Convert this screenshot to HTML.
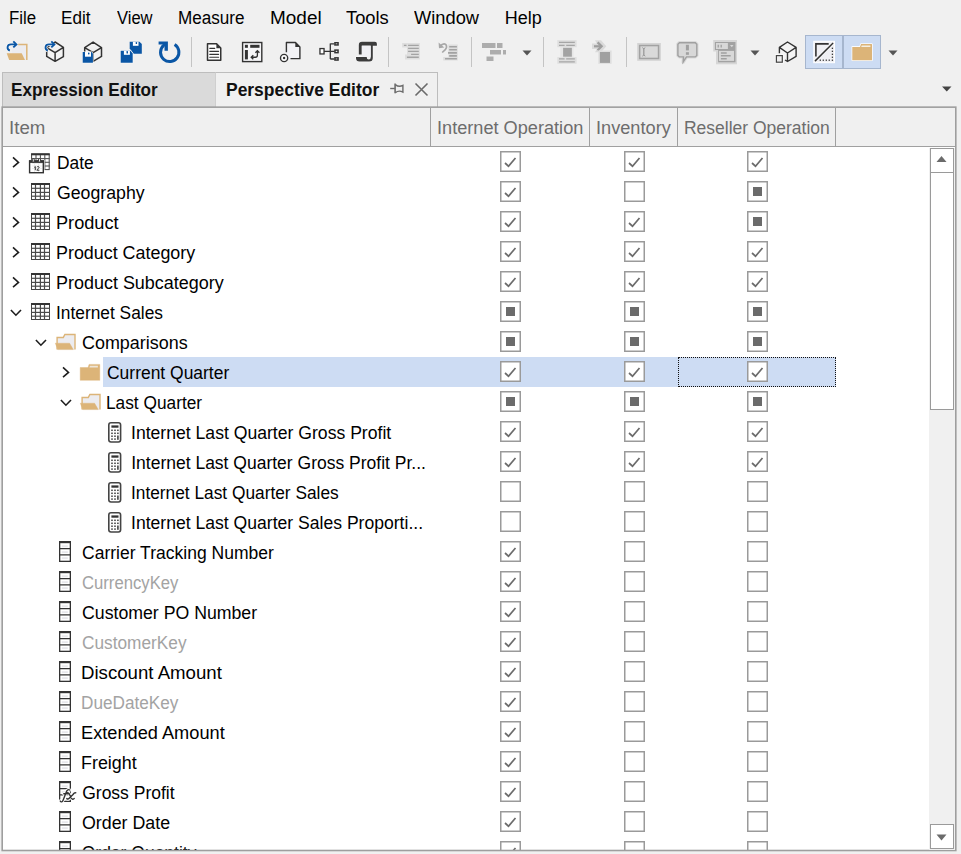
<!DOCTYPE html>
<html><head><meta charset="utf-8"><style>
html,body{margin:0;padding:0;width:961px;height:854px;overflow:hidden;background:#f0f0f0;position:relative}
.t{position:absolute;white-space:nowrap;line-height:1;font-family:"Liberation Sans", sans-serif;transform-origin:0 0}
svg{overflow:visible}
</style></head><body>
<div class="t" style="left:9.2px;top:9.01px;font-size:18px;color:#000;font-weight:normal;transform:scaleX(0.9352);">File</div><div class="t" style="left:61.2px;top:9.01px;font-size:18px;color:#000;font-weight:normal;transform:scaleX(0.9500);">Edit</div><div class="t" style="left:116.7px;top:9.01px;font-size:18px;color:#000;font-weight:normal;transform:scaleX(0.9187);">View</div><div class="t" style="left:177.7px;top:9.01px;font-size:18px;color:#000;font-weight:normal;transform:scaleX(0.9493);">Measure</div><div class="t" style="left:269.7px;top:9.01px;font-size:18px;color:#000;font-weight:normal;transform:scaleX(1.0532);">Model</div><div class="t" style="left:345.7px;top:9.01px;font-size:18px;color:#000;font-weight:normal;transform:scaleX(1.0183);">Tools</div><div class="t" style="left:414.2px;top:9.01px;font-size:18px;color:#000;font-weight:normal;transform:scaleX(1.0156);">Window</div><div class="t" style="left:504.7px;top:9.01px;font-size:18px;color:#000;font-weight:normal;">Help</div><div style="position:absolute;left:191.0px;top:37px;width:1px;height:30px;background:#c4c4c4"></div><div style="position:absolute;left:388.0px;top:37px;width:1px;height:30px;background:#c4c4c4"></div><div style="position:absolute;left:471.0px;top:37px;width:1px;height:30px;background:#c4c4c4"></div><div style="position:absolute;left:543.0px;top:37px;width:1px;height:30px;background:#c4c4c4"></div><div style="position:absolute;left:626.0px;top:37px;width:1px;height:30px;background:#c4c4c4"></div><div style="position:absolute;left:805px;top:35px;width:76px;height:34px;background:#cddcf3;border:1px solid #a6b6ce;box-sizing:border-box"></div><div style="position:absolute;left:842px;top:35px;width:1.5px;height:34px;background:#a6b6ce"></div><svg style="position:absolute;left:4px;top:38px;" width="28" height="26" viewBox="0 0 28 26">
<path d="M12 6.4 H22.8 V21.9 H8 V12 Z" fill="#ececf0"/>
<path d="M14.2 6.4 H22.8 V21.9" fill="none" stroke="#dcb478" stroke-width="1.5"/>
<path d="M2.7 15.2 H17.7 L21 21.9 H5.2 Z" fill="#dcb478"/>
<path d="M5.8 12.6 C2.6 11.2 2.6 6.4 7 6.4 H12" fill="none" stroke="#f8f8f8" stroke-width="3.4"/>
<path d="M5.8 12.6 C2.6 11.2 2.6 6.4 7 6.4 H12" fill="none" stroke="#0a56a5" stroke-width="1.8"/>
<path d="M9.3 3.4 L12.4 6.4 L9.3 9.4" fill="none" stroke="#0a56a5" stroke-width="1.9"/>
</svg><svg style="position:absolute;left:42px;top:38px;" width="26" height="28" viewBox="0 0 26 28">
<path d="M13.1 4 L21.4 9.3 V18.7 L13.1 23.3 L4.7 18.4 V9.6 Z M4.7 9.6 L13.1 14.6 L21.4 9.3 M13.1 14.6 V23.3" fill="#f4f4f4" stroke="#333" stroke-width="1.5" stroke-linejoin="round"/>
<path d="M5.8 12.6 C2.6 11.2 2.6 6.4 7 6.4 H12" fill="none" stroke="#f8f8f8" stroke-width="3.4"/>
<path d="M5.8 12.6 C2.6 11.2 2.6 6.4 7 6.4 H12" fill="none" stroke="#0a56a5" stroke-width="1.8"/>
<path d="M9.3 3.4 L12.4 6.4 L9.3 9.4" fill="none" stroke="#0a56a5" stroke-width="1.9"/>
</svg><svg style="position:absolute;left:80px;top:38px;" width="26" height="28" viewBox="0 0 26 28">
<path d="M13.1 4.1 L21.5 9.6 V18.4 L13.1 23.3 L4.7 18.4 V9.6 Z M4.7 9.6 L13.1 14.6 L21.5 9.6 M13.1 14.6 V23.3" fill="#f4f4f4" stroke="#333" stroke-width="1.5" stroke-linejoin="round"/>
<path d="M2.7 14 H11.5 L12.9 15.5 V24.7 H2.7 Z" fill="#0a56a5" stroke="#fafafa" stroke-width="1.2" paint-order="stroke"/>
<rect x="5" y="14" width="6" height="4.7" fill="#fff"/>
<rect x="8" y="14.4" width="1.5" height="2" rx="0.6" fill="#0a56a5"/>
</svg><svg style="position:absolute;left:118px;top:38px;" width="26" height="28" viewBox="0 0 26 28">
<path d="M11.7 3.8 H21.5 L23.8 6 V15.7 H15.6 L11.7 10.6 Z" fill="#0a56a5"/>
<rect x="14.9" y="3.8" width="5.6" height="4" fill="#fff"/>
<rect x="17.7" y="4" width="1.4" height="2" rx="0.6" fill="#0a56a5"/>
<path d="M2.7 12.75 H12.5 L14.7 15.5 V24.7 H2.7 Z" fill="#0a56a5" stroke="#fafafa" stroke-width="1.3" paint-order="stroke"/>
<rect x="5.9" y="12.75" width="6" height="4.05" fill="#fff"/>
<rect x="8.5" y="13" width="1.5" height="2.5" rx="0.6" fill="#0a56a5"/>
</svg><svg style="position:absolute;left:156px;top:38px;" width="26" height="28" viewBox="0 0 26 28">
<path d="M18.6 6.5 A9.2 9.2 0 1 1 7.2 7.8" fill="none" stroke="#0a56a5" stroke-width="3"/>
<path d="M2.6 3.6 H11.9 V12.75 H8.5 V6.6 H2.6 Z" fill="#0a56a5"/>
<path d="M6.5 8.5 L10 5" stroke="#0a56a5" stroke-width="3"/>
</svg><svg style="position:absolute;left:204px;top:40px;" width="20" height="24" viewBox="0 0 20 24">
<path d="M3.5 3.65 H12.6 L16.75 7.9 V20.15 H3.5 Z" fill="#fff" stroke="#333" stroke-width="1.5" stroke-linejoin="round"/>
<path d="M12.4 3.65 L16.75 8.2 H12.4 Z" fill="#333"/>
<path d="M5.8 8.3 H10.75 M5.8 11.3 H14.6 M5.8 14.3 H14.6 M5.8 17.25 H14.6" stroke="#333" stroke-width="1.2" stroke-linecap="round"/>
</svg><svg style="position:absolute;left:240px;top:40px;" width="24" height="24" viewBox="0 0 24 24">
<rect x="2.6" y="2.5" width="19.2" height="19.1" fill="#f6f6f8" stroke="#333" stroke-width="1.4"/>
<rect x="4.9" y="4.8" width="3" height="3" fill="#333"/>
<rect x="10.2" y="4.8" width="9.3" height="3" fill="#333"/>
<rect x="4.9" y="10" width="3" height="9.4" fill="#333"/>
<path d="M17.4 10.6 V15.3 A2 2 0 0 1 15.4 17.25 H11.2 M15.4 12.8 L17.4 10.6 L19.4 12.8 M13.3 15.2 L11.2 17.25 L13.3 19.3" fill="none" stroke="#333" stroke-width="1.3"/>
</svg><svg style="position:absolute;left:277px;top:40px;" width="26" height="24" viewBox="0 0 26 24">
<path d="M9.4 2.5 H18.5 L22.9 6.9 V18.65 H9.4 Z" fill="#f2f2f5"/>
<path d="M9.4 12.3 V2.5 H18.5 L22.9 6.9 V18.65 H13.5" fill="none" stroke="#333" stroke-width="1.4" stroke-linejoin="round"/>
<path d="M18.3 2.5 L22.9 7.1 H18.3 Z" fill="#333"/>
<circle cx="7.1" cy="18" r="4.3" fill="#f6f6f6"/>
<circle cx="7.1" cy="18" r="3.6" fill="#fff" stroke="#333" stroke-width="1.4"/>
<circle cx="7.1" cy="18" r="1.2" fill="#333"/>
</svg><svg style="position:absolute;left:317px;top:40px;" width="24" height="24" viewBox="0 0 24 24">
<rect x="2.95" y="8.55" width="4.1" height="5.4" fill="#fff" stroke="#333" stroke-width="1.3"/>
<path d="M7.05 11.3 H17.5 M13.3 3.6 V19 M13.3 3.85 H17.5 M13.3 19 H17.5" fill="none" stroke="#333" stroke-width="1.3"/>
<rect x="17.95" y="2.75" width="3.1" height="2.2" fill="#fff" stroke="#333" stroke-width="1.5"/>
<rect x="17.95" y="10.1" width="3.1" height="2.55" fill="#fff" stroke="#333" stroke-width="1.5"/>
<rect x="17.95" y="17.85" width="3.1" height="2.2" fill="#fff" stroke="#333" stroke-width="1.5"/>
</svg><svg style="position:absolute;left:350px;top:36px;" width="30" height="30" viewBox="0 0 30 30">
<path d="M8.8 18.6 V9 A3.2 3.2 0 0 1 12 5.8 H25 A1.9 1.9 0 0 1 26.9 7.7 V9.66 H22.8 V22 A3.6 3.6 0 0 1 19.2 25.6 H9.5 A3.5 3.5 0 0 1 6 22.1 V20.9 H16.8 V21.5 A1.95 1.95 0 0 0 20.7 21.5 V9.66 H11.8 V18.6 Z" fill="#3c3c3c" stroke="#fff" stroke-width="0.8" paint-order="stroke"/>
<rect x="11.8" y="9.66" width="8.9" height="11.2" fill="#f0f0f4"/>
</svg><svg style="position:absolute;left:400px;top:40px;" width="22" height="22" viewBox="0 0 22 22">
<path d="M2.1 3 H19.9 V19.5 H5 V14.5 H7 V7.4 H2.1 Z" fill="#dedede"/>
<path d="M3.9 5.3 H6.5 M8.1 5.3 H18.8 M8.1 8.3 H18.8 M8.1 11.3 H18.8 M11.1 14.3 H18.8 M6.9 17.25 H18.8" stroke="#a3a3a3" stroke-width="1.3"/>
</svg><svg style="position:absolute;left:435px;top:38px;" width="24" height="26" viewBox="0 0 24 26">
<path d="M13.3 6.4 H22.8 V22.6 H8.2 V19 H13.3 Z" fill="#dedede"/>
<path d="M14.2 8.7 H21.9 M14.2 11.7 H21.9 M13 14.9 H21.9 M14.2 17.85 H21.9 M10 20.8 H21.9" stroke="#a3a3a3" stroke-width="1.6"/>
<path d="M7.2 14.5 L10.3 11.6 C12.6 9.5 11.6 5.8 9 5.8 C7.6 5.8 6.4 6.6 5.4 8" fill="none" stroke="#a8a8a8" stroke-width="1.7"/>
<path d="M3.6 4.6 L4 10.2 L9.3 9.6 Z" fill="#a8a8a8"/>
</svg><svg style="position:absolute;left:480px;top:40px;" width="28" height="24" viewBox="0 0 28 24">
<rect x="2" y="3" width="13.5" height="5" fill="#adadad"/>
<rect x="17" y="3" width="5.5" height="5" fill="#adadad"/>
<rect x="10" y="10" width="11" height="4.5" fill="#adadad"/>
<rect x="23" y="10" width="3" height="4.5" fill="#adadad"/>
<rect x="6.5" y="16.5" width="7" height="4.5" fill="#adadad"/>
</svg><svg style="position:absolute;left:521.5px;top:49.5px;" width="10" height="6" viewBox="0 0 10 6"><path d="M0.5 0.5 H9.5 L5 5.5 Z" fill="#555"/></svg><svg style="position:absolute;left:750px;top:49.5px;" width="10" height="6" viewBox="0 0 10 6"><path d="M0.5 0.5 H9.5 L5 5.5 Z" fill="#555"/></svg><svg style="position:absolute;left:887.5px;top:49.5px;" width="10" height="6" viewBox="0 0 10 6"><path d="M0.5 0.5 H9.5 L5 5.5 Z" fill="#555"/></svg><svg style="position:absolute;left:555px;top:38px;" width="24" height="28" viewBox="0 0 24 28">
<rect x="5.3" y="9.2" width="13.2" height="10.1" fill="#e6e6e6"/>
<rect x="2.3" y="2.2" width="19.3" height="7" fill="#dedede"/>
<rect x="2.3" y="19.1" width="19.3" height="6.65" fill="#dedede"/>
<path d="M4 4.3 H19.8 M4 7.3 H9.6 M11.2 7.3 H19.8 M4 20.8 H9.6 M11.2 20.8 H19.8 M4 23.8 H19.8" stroke="#a6a6a6" stroke-width="1.3"/>
<rect x="8.1" y="9.8" width="8.75" height="8.9" fill="#a3a3a3"/>
</svg><svg style="position:absolute;left:590px;top:38px;" width="24" height="28" viewBox="0 0 24 28">
<path d="M2 5.5 H6.8 L5 2.2 H11 L16.3 8.3 L11 14.3 H5 L6.8 11 H2 Z" fill="#dadada"/>
<path d="M4 8.3 H11.5" stroke="#9e9e9e" stroke-width="2.2"/>
<path d="M7.6 4.4 L11.6 8.3 L7.6 12.2" fill="none" stroke="#9e9e9e" stroke-width="2.3"/>
<rect x="8.3" y="12.5" width="13.3" height="13.3" fill="#dedede"/>
<rect x="9.9" y="14" width="10.1" height="10.9" fill="#a0a0a0"/>
</svg><svg style="position:absolute;left:635px;top:40px;" width="28" height="24" viewBox="0 0 28 24">
<rect x="2.2" y="3" width="23.7" height="17.8" fill="#d4d4d4"/>
<rect x="4.65" y="5.55" width="18.9" height="12.9" fill="#d9d9d9" stroke="#a2a2a2" stroke-width="1.5"/>
<path d="M8.8 8.3 V15.5" stroke="#999" stroke-width="1.3"/>
<path d="M7.3 7.6 L8.8 8.8 L10.3 7.6 M7.3 16.2 L8.8 15 L10.3 16.2" fill="none" stroke="#9a9a9a" stroke-width="1"/>
</svg><svg style="position:absolute;left:674px;top:38px;" width="26" height="28" viewBox="0 0 26 28">
<path d="M5.4 4.8 H21.3 L22.8 6.3 V17.4 L21.3 18.9 H12.5 L9.2 24 L9.5 18.9 H5.4 L3.9 17.4 V6.3 Z" fill="#d8d8d8" stroke="#dadada" stroke-width="3.4" stroke-linejoin="round"/>
<path d="M5.4 4.8 H21.3 L22.8 6.3 V17.4 L21.3 18.9 H12.5 L9.2 24 L9.5 18.9 H5.4 L3.9 17.4 V6.3 Z" fill="#d8d8d8" stroke="#a0a0a0" stroke-width="1.4"/>
<rect x="11.9" y="6.8" width="3" height="5.6" fill="#a0a0a0"/>
<rect x="11.9" y="14.2" width="3" height="2.6" fill="#a0a0a0"/>
</svg><svg style="position:absolute;left:711px;top:38px;" width="28" height="28" viewBox="0 0 28 28">
<rect x="2.2" y="2" width="23.8" height="11.5" fill="#d6d6d6"/>
<rect x="5" y="12" width="21" height="14.3" fill="#d6d6d6"/>
<rect x="3.9" y="4" width="20.6" height="8" fill="#a2a2a2"/>
<rect x="5" y="5" width="11.9" height="6" fill="#d8d8d8"/>
<path d="M7.25 6.8 V9.5 M10.2 6.8 V9.5" stroke="#a0a0a0" stroke-width="1.3"/>
<path d="M19 7 H22.5 L20.75 9.2 Z" fill="#d8d8d8"/>
<rect x="7.1" y="12" width="17.4" height="12.3" fill="#a2a2a2"/>
<rect x="8" y="12.9" width="15" height="10" fill="#d8d8d8"/>
<path d="M9.9 14.9 H15.7 M9.9 17.85 H19.7 M9.9 20.8 H15.7" stroke="#a0a0a0" stroke-width="1.5"/>
</svg><svg style="position:absolute;left:773px;top:38px;" width="26" height="28" viewBox="0 0 26 28">
<path d="M6.4 9.4 L14.5 4 L23.1 9.4 V18.4 L14.5 23.5 L6.4 18.4 Z" fill="#f4f4f4"/>
<path d="M6.4 15.2 V9.4 L14.5 4 L23.1 9.4 V18.4 L14.5 23.5 L12 22 M6.4 9.4 L14.5 15 L23.1 9.4 M14.5 15 V23.5" fill="none" stroke="#333" stroke-width="1.4" stroke-linejoin="round"/>
<rect x="3.4" y="17.6" width="5.9" height="6.6" fill="#ededed" stroke="#fafafa" stroke-width="3"/>
<rect x="3.4" y="17.6" width="5.9" height="6.6" fill="#ededed" stroke="#444" stroke-width="1.2"/>
</svg><svg style="position:absolute;left:812px;top:40px;" width="24" height="24" viewBox="0 0 24 24">
<rect x="1.8" y="1.3" width="20.7" height="21.4" fill="#f0f0f4" stroke="#fff" stroke-width="1"/>
<path d="M3.9 16.4 V3.9 H16.7" fill="none" stroke="#333" stroke-width="1.6"/>
<path d="M3 21.1 L21.1 3" stroke="#fafafa" stroke-width="2.6"/>
<path d="M3 21.1 L21.1 3" stroke="#333" stroke-width="1.5"/>
<rect x="19.75" y="7.65" width="1.3" height="1.3" fill="#333"/><rect x="19.75" y="10.65" width="1.3" height="1.3" fill="#333"/><rect x="19.75" y="13.65" width="1.3" height="1.3" fill="#333"/><rect x="19.75" y="16.60" width="1.3" height="1.3" fill="#333"/><rect x="19.75" y="19.55" width="1.3" height="1.3" fill="#333"/><rect x="7.65" y="19.55" width="1.3" height="1.3" fill="#333"/><rect x="10.65" y="19.55" width="1.3" height="1.3" fill="#333"/><rect x="13.65" y="19.55" width="1.3" height="1.3" fill="#333"/><rect x="16.60" y="19.55" width="1.3" height="1.3" fill="#333"/>
</svg><svg style="position:absolute;left:849px;top:40px;" width="26" height="24" viewBox="0 0 26 24">
<path d="M3.3 6.9 H11 L12 4.1 H22.6 A0.5 0.5 0 0 1 23 4.5 V20.2 H3.3 Z" fill="#dcb478" stroke="#fafcff" stroke-width="1.6" paint-order="stroke" stroke-linejoin="round"/>
<path d="M12.7 5.5 H21.4 V6.9 H12.2 Z" fill="#f6efe2"/>
</svg><div style="position:absolute;left:2px;top:72px;width:213px;height:35px;background:#dadada;border-top:1px solid #bdbdbd;border-left:1px solid #bdbdbd;box-sizing:border-box"></div><div style="position:absolute;left:215px;top:72px;width:223px;height:35px;background:#f0f0f0;border-top:1px solid #bdbdbd;border-right:1px solid #bdbdbd;border-left:1px solid #cfcfcf;box-sizing:border-box"></div><div class="t" style="left:11.0px;top:82.19px;font-size:17.5px;color:#111;font-weight:bold;transform:scaleX(0.9799);">Expression Editor</div><div class="t" style="left:225.5px;top:82.19px;font-size:17.5px;color:#111;font-weight:bold;transform:scaleX(0.9967);">Perspective Editor</div><svg style="position:absolute;left:388px;top:80px;" width="18" height="16" viewBox="0 0 18 16">
<path d="M2.2 8.5 H6.9" stroke="#6b6b6b" stroke-width="1.4"/>
<path d="M7.1 3.5 V13.2" stroke="#6b6b6b" stroke-width="1.6"/>
<path d="M7.3 4.6 Q11 7.6 14.9 5.4 V12.1 Q11 10 7.3 12.6" fill="none" stroke="#6b6b6b" stroke-width="1.4"/>
</svg><svg style="position:absolute;left:413px;top:81px;" width="18" height="18" viewBox="0 0 18 18"><path d="M2.5 2.5 L14.5 14.5 M14.5 2.5 L2.5 14.5" stroke="#6b6b6b" stroke-width="1.6"/></svg><svg style="position:absolute;left:941px;top:85px;" width="12" height="8" viewBox="0 0 12 8"><path d="M1 1.5 H10.5 L5.75 6.5 Z" fill="#444"/></svg><div style="position:absolute;left:2px;top:107px;width:954px;height:744px;background:#fff"></div><div style="position:absolute;left:3px;top:108px;width:953px;height:38.5px;background:#f0f0f0"></div><div style="position:absolute;left:3px;top:145.8px;width:953px;height:1.5px;background:#a0a0a0"></div><div style="position:absolute;left:430px;top:108px;width:1.2px;height:38.5px;background:#a0a0a0"></div><div style="position:absolute;left:589px;top:108px;width:1.2px;height:38.5px;background:#a0a0a0"></div><div style="position:absolute;left:677px;top:108px;width:1.2px;height:38.5px;background:#a0a0a0"></div><div style="position:absolute;left:835px;top:108px;width:1.2px;height:38.5px;background:#a0a0a0"></div><div class="t" style="left:9.25px;top:120.19px;font-size:17.5px;color:#6d6d6d;font-weight:normal;transform:scaleX(1.0672);">Item</div><div class="t" style="left:437.05px;top:120.19px;font-size:17.5px;color:#6d6d6d;font-weight:normal;transform:scaleX(1.0374);">Internet Operation</div><div class="t" style="left:595.5px;top:120.19px;font-size:17.5px;color:#6d6d6d;font-weight:normal;transform:scaleX(1.0387);">Inventory</div><div class="t" style="left:683.7px;top:120.19px;font-size:17.5px;color:#6d6d6d;font-weight:normal;transform:scaleX(0.9986);">Reseller Operation</div><div style="position:absolute;left:0;top:0;width:929px;height:849.5px;overflow:hidden"><div style="position:absolute;left:103px;top:357px;width:575px;height:30px;background:#cddcf3"></div><div style="position:absolute;left:678px;top:357px;width:157.5px;height:29.5px;background:#cddcf3;border:1px dotted #111;box-sizing:border-box"></div><svg style="position:absolute;left:9.6px;top:154.8px;" width="12" height="16" viewBox="0 0 12 16"><path d="M3 2.3 L8.5 7.4 L3 12.1" fill="none" stroke="#1e1e1e" stroke-width="1.6"/></svg><svg style="position:absolute;left:29px;top:152.5px;" width="22" height="21" viewBox="0 0 22 21"><rect x="2.6" y="0.9" width="17.6" height="15.7" fill="#fff" stroke="#444" stroke-width="1"/><rect x="2.1" y="0.4" width="18.6" height="1.9" fill="#333"/><path d="M7.0 2 V17" stroke="#555" stroke-width="1.1"/><path d="M11.4 2 V17" stroke="#555" stroke-width="1.1"/><path d="M15.8 2 V17" stroke="#555" stroke-width="1.1"/><path d="M2.1 5.6 H20.7" stroke="#555" stroke-width="1.1"/><path d="M2.1 9.3 H20.7" stroke="#555" stroke-width="1.1"/><path d="M2.1 13.0 H20.7" stroke="#555" stroke-width="1.1"/><rect x="0.6" y="8" width="13.7" height="11.7" fill="#fff" stroke="#fafafa" stroke-width="2.4"/><rect x="0.6" y="8" width="13.7" height="11.7" fill="#fff" stroke="#333" stroke-width="1.4"/><rect x="0" y="7.3" width="15" height="2.6" fill="#333"/><path d="M3.2 10.5 H13 M3.2 13 H13 M3.2 15.5 H13 M5.5 10 V19 M9.5 10 V19" stroke="#e6e6e6" stroke-width="0.8"/><rect x="3.3" y="5.6" width="1.9" height="3.4" rx="0.6" fill="#fff" stroke="#333" stroke-width="1"/><rect x="9.5" y="5.6" width="1.9" height="3.4" rx="0.6" fill="#fff" stroke="#333" stroke-width="1"/><path d="M5.3 14.4 L6.3 13.5 V17.2 M7.9 14.2 C8.2 13.4 9.9 13.3 10.1 14.2 C10.3 15 8.3 16.2 7.8 17.2 H10.4" fill="none" stroke="#333" stroke-width="1"/></svg><div class="t" style="left:57.2px;top:155.19px;font-size:17.5px;color:#000;font-weight:normal;transform:scaleX(0.9929);">Date</div><svg style="position:absolute;left:500px;top:151px;" width="21" height="21" viewBox="0 0 21 21"><rect x="0.75" y="0.75" width="19.5" height="19.5" fill="#fff" stroke="#9a9a9a" stroke-width="1.5"/><path d="M5 12 L8.5 15.2 L15.5 7" fill="none" stroke="#6b6b6b" stroke-width="1.7"/></svg><svg style="position:absolute;left:624px;top:151px;" width="21" height="21" viewBox="0 0 21 21"><rect x="0.75" y="0.75" width="19.5" height="19.5" fill="#fff" stroke="#9a9a9a" stroke-width="1.5"/><path d="M5 12 L8.5 15.2 L15.5 7" fill="none" stroke="#6b6b6b" stroke-width="1.7"/></svg><svg style="position:absolute;left:747px;top:151px;" width="21" height="21" viewBox="0 0 21 21"><rect x="0.75" y="0.75" width="19.5" height="19.5" fill="#fff" stroke="#9a9a9a" stroke-width="1.5"/><path d="M5 12 L8.5 15.2 L15.5 7" fill="none" stroke="#6b6b6b" stroke-width="1.7"/></svg><svg style="position:absolute;left:9.6px;top:184.8px;" width="12" height="16" viewBox="0 0 12 16"><path d="M3 2.3 L8.5 7.4 L3 12.1" fill="none" stroke="#1e1e1e" stroke-width="1.6"/></svg><svg style="position:absolute;left:31px;top:183px;" width="19" height="17" viewBox="0 0 19 17"><rect x="0.5" y="0.5" width="18" height="16" fill="#fff" stroke="#444" stroke-width="1"/><rect x="0" y="0" width="19" height="2" fill="#333"/><path d="M4.5 2 V17" stroke="#4a4a4a" stroke-width="1.2"/><path d="M9.4 2 V17" stroke="#4a4a4a" stroke-width="1.2"/><path d="M13.5 2 V17" stroke="#4a4a4a" stroke-width="1.2"/><path d="M0 5.3 H19" stroke="#4a4a4a" stroke-width="1.2"/><path d="M0 9.4 H19" stroke="#4a4a4a" stroke-width="1.2"/><path d="M0 13.2 H19" stroke="#4a4a4a" stroke-width="1.2"/></svg><div class="t" style="left:57.2px;top:185.19px;font-size:17.5px;color:#000;font-weight:normal;transform:scaleX(1.0116);">Geography</div><svg style="position:absolute;left:500px;top:181px;" width="21" height="21" viewBox="0 0 21 21"><rect x="0.75" y="0.75" width="19.5" height="19.5" fill="#fff" stroke="#9a9a9a" stroke-width="1.5"/><path d="M5 12 L8.5 15.2 L15.5 7" fill="none" stroke="#6b6b6b" stroke-width="1.7"/></svg><svg style="position:absolute;left:624px;top:181px;" width="21" height="21" viewBox="0 0 21 21"><rect x="0.75" y="0.75" width="19.5" height="19.5" fill="#fff" stroke="#9a9a9a" stroke-width="1.5"/></svg><svg style="position:absolute;left:747px;top:181px;" width="21" height="21" viewBox="0 0 21 21"><rect x="0.75" y="0.75" width="19.5" height="19.5" fill="#fff" stroke="#9a9a9a" stroke-width="1.5"/><rect x="6" y="6" width="9" height="9" fill="#6b6b6b"/></svg><svg style="position:absolute;left:9.6px;top:214.8px;" width="12" height="16" viewBox="0 0 12 16"><path d="M3 2.3 L8.5 7.4 L3 12.1" fill="none" stroke="#1e1e1e" stroke-width="1.6"/></svg><svg style="position:absolute;left:31px;top:213px;" width="19" height="17" viewBox="0 0 19 17"><rect x="0.5" y="0.5" width="18" height="16" fill="#fff" stroke="#444" stroke-width="1"/><rect x="0" y="0" width="19" height="2" fill="#333"/><path d="M4.5 2 V17" stroke="#4a4a4a" stroke-width="1.2"/><path d="M9.4 2 V17" stroke="#4a4a4a" stroke-width="1.2"/><path d="M13.5 2 V17" stroke="#4a4a4a" stroke-width="1.2"/><path d="M0 5.3 H19" stroke="#4a4a4a" stroke-width="1.2"/><path d="M0 9.4 H19" stroke="#4a4a4a" stroke-width="1.2"/><path d="M0 13.2 H19" stroke="#4a4a4a" stroke-width="1.2"/></svg><div class="t" style="left:56.2px;top:215.19px;font-size:17.5px;color:#000;font-weight:normal;transform:scaleX(1.0381);">Product</div><svg style="position:absolute;left:500px;top:211px;" width="21" height="21" viewBox="0 0 21 21"><rect x="0.75" y="0.75" width="19.5" height="19.5" fill="#fff" stroke="#9a9a9a" stroke-width="1.5"/><path d="M5 12 L8.5 15.2 L15.5 7" fill="none" stroke="#6b6b6b" stroke-width="1.7"/></svg><svg style="position:absolute;left:624px;top:211px;" width="21" height="21" viewBox="0 0 21 21"><rect x="0.75" y="0.75" width="19.5" height="19.5" fill="#fff" stroke="#9a9a9a" stroke-width="1.5"/><path d="M5 12 L8.5 15.2 L15.5 7" fill="none" stroke="#6b6b6b" stroke-width="1.7"/></svg><svg style="position:absolute;left:747px;top:211px;" width="21" height="21" viewBox="0 0 21 21"><rect x="0.75" y="0.75" width="19.5" height="19.5" fill="#fff" stroke="#9a9a9a" stroke-width="1.5"/><rect x="6" y="6" width="9" height="9" fill="#6b6b6b"/></svg><svg style="position:absolute;left:9.6px;top:244.8px;" width="12" height="16" viewBox="0 0 12 16"><path d="M3 2.3 L8.5 7.4 L3 12.1" fill="none" stroke="#1e1e1e" stroke-width="1.6"/></svg><svg style="position:absolute;left:31px;top:243px;" width="19" height="17" viewBox="0 0 19 17"><rect x="0.5" y="0.5" width="18" height="16" fill="#fff" stroke="#444" stroke-width="1"/><rect x="0" y="0" width="19" height="2" fill="#333"/><path d="M4.5 2 V17" stroke="#4a4a4a" stroke-width="1.2"/><path d="M9.4 2 V17" stroke="#4a4a4a" stroke-width="1.2"/><path d="M13.5 2 V17" stroke="#4a4a4a" stroke-width="1.2"/><path d="M0 5.3 H19" stroke="#4a4a4a" stroke-width="1.2"/><path d="M0 9.4 H19" stroke="#4a4a4a" stroke-width="1.2"/><path d="M0 13.2 H19" stroke="#4a4a4a" stroke-width="1.2"/></svg><div class="t" style="left:56.2px;top:245.19px;font-size:17.5px;color:#000;font-weight:normal;transform:scaleX(1.0222);">Product Category</div><svg style="position:absolute;left:500px;top:241px;" width="21" height="21" viewBox="0 0 21 21"><rect x="0.75" y="0.75" width="19.5" height="19.5" fill="#fff" stroke="#9a9a9a" stroke-width="1.5"/><path d="M5 12 L8.5 15.2 L15.5 7" fill="none" stroke="#6b6b6b" stroke-width="1.7"/></svg><svg style="position:absolute;left:624px;top:241px;" width="21" height="21" viewBox="0 0 21 21"><rect x="0.75" y="0.75" width="19.5" height="19.5" fill="#fff" stroke="#9a9a9a" stroke-width="1.5"/><path d="M5 12 L8.5 15.2 L15.5 7" fill="none" stroke="#6b6b6b" stroke-width="1.7"/></svg><svg style="position:absolute;left:747px;top:241px;" width="21" height="21" viewBox="0 0 21 21"><rect x="0.75" y="0.75" width="19.5" height="19.5" fill="#fff" stroke="#9a9a9a" stroke-width="1.5"/><path d="M5 12 L8.5 15.2 L15.5 7" fill="none" stroke="#6b6b6b" stroke-width="1.7"/></svg><svg style="position:absolute;left:9.6px;top:274.8px;" width="12" height="16" viewBox="0 0 12 16"><path d="M3 2.3 L8.5 7.4 L3 12.1" fill="none" stroke="#1e1e1e" stroke-width="1.6"/></svg><svg style="position:absolute;left:31px;top:273px;" width="19" height="17" viewBox="0 0 19 17"><rect x="0.5" y="0.5" width="18" height="16" fill="#fff" stroke="#444" stroke-width="1"/><rect x="0" y="0" width="19" height="2" fill="#333"/><path d="M4.5 2 V17" stroke="#4a4a4a" stroke-width="1.2"/><path d="M9.4 2 V17" stroke="#4a4a4a" stroke-width="1.2"/><path d="M13.5 2 V17" stroke="#4a4a4a" stroke-width="1.2"/><path d="M0 5.3 H19" stroke="#4a4a4a" stroke-width="1.2"/><path d="M0 9.4 H19" stroke="#4a4a4a" stroke-width="1.2"/><path d="M0 13.2 H19" stroke="#4a4a4a" stroke-width="1.2"/></svg><div class="t" style="left:56.2px;top:275.19px;font-size:17.5px;color:#000;font-weight:normal;transform:scaleX(1.0262);">Product Subcategory</div><svg style="position:absolute;left:500px;top:271px;" width="21" height="21" viewBox="0 0 21 21"><rect x="0.75" y="0.75" width="19.5" height="19.5" fill="#fff" stroke="#9a9a9a" stroke-width="1.5"/><path d="M5 12 L8.5 15.2 L15.5 7" fill="none" stroke="#6b6b6b" stroke-width="1.7"/></svg><svg style="position:absolute;left:624px;top:271px;" width="21" height="21" viewBox="0 0 21 21"><rect x="0.75" y="0.75" width="19.5" height="19.5" fill="#fff" stroke="#9a9a9a" stroke-width="1.5"/><path d="M5 12 L8.5 15.2 L15.5 7" fill="none" stroke="#6b6b6b" stroke-width="1.7"/></svg><svg style="position:absolute;left:747px;top:271px;" width="21" height="21" viewBox="0 0 21 21"><rect x="0.75" y="0.75" width="19.5" height="19.5" fill="#fff" stroke="#9a9a9a" stroke-width="1.5"/><path d="M5 12 L8.5 15.2 L15.5 7" fill="none" stroke="#6b6b6b" stroke-width="1.7"/></svg><svg style="position:absolute;left:7.8999999999999995px;top:306.8px;" width="16" height="12" viewBox="0 0 16 12"><path d="M2.9 3.0 L7.9 8.2 L13.0 3.0" fill="none" stroke="#1e1e1e" stroke-width="1.6"/></svg><svg style="position:absolute;left:31px;top:303px;" width="19" height="17" viewBox="0 0 19 17"><rect x="0.5" y="0.5" width="18" height="16" fill="#fff" stroke="#444" stroke-width="1"/><rect x="0" y="0" width="19" height="2" fill="#333"/><path d="M4.5 2 V17" stroke="#4a4a4a" stroke-width="1.2"/><path d="M9.4 2 V17" stroke="#4a4a4a" stroke-width="1.2"/><path d="M13.5 2 V17" stroke="#4a4a4a" stroke-width="1.2"/><path d="M0 5.3 H19" stroke="#4a4a4a" stroke-width="1.2"/><path d="M0 9.4 H19" stroke="#4a4a4a" stroke-width="1.2"/><path d="M0 13.2 H19" stroke="#4a4a4a" stroke-width="1.2"/></svg><div class="t" style="left:56.2px;top:305.19px;font-size:17.5px;color:#000;font-weight:normal;transform:scaleX(0.9906);">Internet Sales</div><svg style="position:absolute;left:500px;top:301px;" width="21" height="21" viewBox="0 0 21 21"><rect x="0.75" y="0.75" width="19.5" height="19.5" fill="#fff" stroke="#9a9a9a" stroke-width="1.5"/><rect x="6" y="6" width="9" height="9" fill="#6b6b6b"/></svg><svg style="position:absolute;left:624px;top:301px;" width="21" height="21" viewBox="0 0 21 21"><rect x="0.75" y="0.75" width="19.5" height="19.5" fill="#fff" stroke="#9a9a9a" stroke-width="1.5"/><rect x="6" y="6" width="9" height="9" fill="#6b6b6b"/></svg><svg style="position:absolute;left:747px;top:301px;" width="21" height="21" viewBox="0 0 21 21"><rect x="0.75" y="0.75" width="19.5" height="19.5" fill="#fff" stroke="#9a9a9a" stroke-width="1.5"/><rect x="6" y="6" width="9" height="9" fill="#6b6b6b"/></svg><svg style="position:absolute;left:32.9px;top:336.8px;" width="16" height="12" viewBox="0 0 16 12"><path d="M2.9 3.0 L7.9 8.2 L13.0 3.0" fill="none" stroke="#1e1e1e" stroke-width="1.6"/></svg><svg style="position:absolute;left:54.5px;top:334px;" width="21.5" height="16.5" viewBox="0 0 21.5 16.5"><path d="M2.1 15.4 V3.45 H8.3 L9.9 0.5 H20 V15.4" fill="#ececf0" stroke="#dcb478" stroke-width="1.4"/><path d="M0.3 9.2 H14.6 L18.3 15.6 H2.8 Z" fill="#dcb478" stroke="#dcb478" stroke-width="0.4" stroke-linejoin="round"/></svg><div class="t" style="left:82.10000000000001px;top:335.19px;font-size:17.5px;color:#000;font-weight:normal;transform:scaleX(1.0245);">Comparisons</div><svg style="position:absolute;left:500px;top:331px;" width="21" height="21" viewBox="0 0 21 21"><rect x="0.75" y="0.75" width="19.5" height="19.5" fill="#fff" stroke="#9a9a9a" stroke-width="1.5"/><rect x="6" y="6" width="9" height="9" fill="#6b6b6b"/></svg><svg style="position:absolute;left:624px;top:331px;" width="21" height="21" viewBox="0 0 21 21"><rect x="0.75" y="0.75" width="19.5" height="19.5" fill="#fff" stroke="#9a9a9a" stroke-width="1.5"/><rect x="6" y="6" width="9" height="9" fill="#6b6b6b"/></svg><svg style="position:absolute;left:747px;top:331px;" width="21" height="21" viewBox="0 0 21 21"><rect x="0.75" y="0.75" width="19.5" height="19.5" fill="#fff" stroke="#9a9a9a" stroke-width="1.5"/><rect x="6" y="6" width="9" height="9" fill="#6b6b6b"/></svg><svg style="position:absolute;left:59.599999999999994px;top:364.8px;" width="12" height="16" viewBox="0 0 12 16"><path d="M3 2.3 L8.5 7.4 L3 12.1" fill="none" stroke="#1e1e1e" stroke-width="1.6"/></svg><svg style="position:absolute;left:80px;top:363.5px;" width="20" height="16.5" viewBox="0 0 20 16.5"><path d="M0.2 3.5 H8.1 L9 0.4 H19.8 V16.3 H0.2 Z" fill="#dcb478" stroke="#dcb478" stroke-width="0.4" stroke-linejoin="round"/><path d="M9.9 1.7 H17.9 V3.4 H9.4 Z" fill="#eee6da"/></svg><div class="t" style="left:107.2px;top:365.19px;font-size:17.5px;color:#000;font-weight:normal;transform:scaleX(0.9975);">Current Quarter</div><svg style="position:absolute;left:500px;top:361px;" width="21" height="21" viewBox="0 0 21 21"><rect x="0.75" y="0.75" width="19.5" height="19.5" fill="#fff" stroke="#9a9a9a" stroke-width="1.5"/><path d="M5 12 L8.5 15.2 L15.5 7" fill="none" stroke="#6b6b6b" stroke-width="1.7"/></svg><svg style="position:absolute;left:624px;top:361px;" width="21" height="21" viewBox="0 0 21 21"><rect x="0.75" y="0.75" width="19.5" height="19.5" fill="#fff" stroke="#9a9a9a" stroke-width="1.5"/><path d="M5 12 L8.5 15.2 L15.5 7" fill="none" stroke="#6b6b6b" stroke-width="1.7"/></svg><svg style="position:absolute;left:747px;top:361px;" width="21" height="21" viewBox="0 0 21 21"><rect x="0.75" y="0.75" width="19.5" height="19.5" fill="#fff" stroke="#9a9a9a" stroke-width="1.5"/><path d="M5 12 L8.5 15.2 L15.5 7" fill="none" stroke="#6b6b6b" stroke-width="1.7"/></svg><svg style="position:absolute;left:57.89999999999999px;top:396.8px;" width="16" height="12" viewBox="0 0 16 12"><path d="M2.9 3.0 L7.9 8.2 L13.0 3.0" fill="none" stroke="#1e1e1e" stroke-width="1.6"/></svg><svg style="position:absolute;left:79.5px;top:394px;" width="21.5" height="16.5" viewBox="0 0 21.5 16.5"><path d="M2.1 15.4 V3.45 H8.3 L9.9 0.5 H20 V15.4" fill="#ececf0" stroke="#dcb478" stroke-width="1.4"/><path d="M0.3 9.2 H14.6 L18.3 15.6 H2.8 Z" fill="#dcb478" stroke="#dcb478" stroke-width="0.4" stroke-linejoin="round"/></svg><div class="t" style="left:106.2px;top:395.19px;font-size:17.5px;color:#000;font-weight:normal;transform:scaleX(0.9875);">Last Quarter</div><svg style="position:absolute;left:500px;top:391px;" width="21" height="21" viewBox="0 0 21 21"><rect x="0.75" y="0.75" width="19.5" height="19.5" fill="#fff" stroke="#9a9a9a" stroke-width="1.5"/><rect x="6" y="6" width="9" height="9" fill="#6b6b6b"/></svg><svg style="position:absolute;left:624px;top:391px;" width="21" height="21" viewBox="0 0 21 21"><rect x="0.75" y="0.75" width="19.5" height="19.5" fill="#fff" stroke="#9a9a9a" stroke-width="1.5"/><rect x="6" y="6" width="9" height="9" fill="#6b6b6b"/></svg><svg style="position:absolute;left:747px;top:391px;" width="21" height="21" viewBox="0 0 21 21"><rect x="0.75" y="0.75" width="19.5" height="19.5" fill="#fff" stroke="#9a9a9a" stroke-width="1.5"/><rect x="6" y="6" width="9" height="9" fill="#6b6b6b"/></svg><svg style="position:absolute;left:108px;top:421.8px;" width="14" height="21" viewBox="0 0 14 21"><rect x="0.8" y="0.8" width="11.8" height="19.15" rx="2.2" fill="#fff" stroke="#444" stroke-width="1.6"/><rect x="3.4" y="3.4" width="7.1" height="2.3" fill="#333"/><rect x="3.2" y="7.55" width="1.6" height="1.5" fill="#444"/><rect x="6.2" y="7.55" width="1.6" height="1.5" fill="#444"/><rect x="9.1" y="7.55" width="1.6" height="1.5" fill="#444"/><rect x="3.2" y="10.55" width="1.6" height="1.5" fill="#444"/><rect x="6.2" y="10.55" width="1.6" height="1.5" fill="#444"/><rect x="9.1" y="10.55" width="1.6" height="1.5" fill="#444"/><rect x="3.2" y="13.45" width="1.6" height="1.5" fill="#444"/><rect x="6.2" y="13.45" width="1.6" height="1.5" fill="#444"/><rect x="3.2" y="16.35" width="1.6" height="1.5" fill="#444"/><rect x="6.2" y="16.35" width="1.6" height="1.5" fill="#444"/><rect x="9.1" y="13.5" width="1.6" height="4.3" fill="#444"/></svg><div class="t" style="left:131.2px;top:425.19px;font-size:17.5px;color:#000;font-weight:normal;transform:scaleX(1.0058);">Internet Last Quarter Gross Profit</div><svg style="position:absolute;left:500px;top:421px;" width="21" height="21" viewBox="0 0 21 21"><rect x="0.75" y="0.75" width="19.5" height="19.5" fill="#fff" stroke="#9a9a9a" stroke-width="1.5"/><path d="M5 12 L8.5 15.2 L15.5 7" fill="none" stroke="#6b6b6b" stroke-width="1.7"/></svg><svg style="position:absolute;left:624px;top:421px;" width="21" height="21" viewBox="0 0 21 21"><rect x="0.75" y="0.75" width="19.5" height="19.5" fill="#fff" stroke="#9a9a9a" stroke-width="1.5"/><path d="M5 12 L8.5 15.2 L15.5 7" fill="none" stroke="#6b6b6b" stroke-width="1.7"/></svg><svg style="position:absolute;left:747px;top:421px;" width="21" height="21" viewBox="0 0 21 21"><rect x="0.75" y="0.75" width="19.5" height="19.5" fill="#fff" stroke="#9a9a9a" stroke-width="1.5"/><path d="M5 12 L8.5 15.2 L15.5 7" fill="none" stroke="#6b6b6b" stroke-width="1.7"/></svg><svg style="position:absolute;left:108px;top:451.8px;" width="14" height="21" viewBox="0 0 14 21"><rect x="0.8" y="0.8" width="11.8" height="19.15" rx="2.2" fill="#fff" stroke="#444" stroke-width="1.6"/><rect x="3.4" y="3.4" width="7.1" height="2.3" fill="#333"/><rect x="3.2" y="7.55" width="1.6" height="1.5" fill="#444"/><rect x="6.2" y="7.55" width="1.6" height="1.5" fill="#444"/><rect x="9.1" y="7.55" width="1.6" height="1.5" fill="#444"/><rect x="3.2" y="10.55" width="1.6" height="1.5" fill="#444"/><rect x="6.2" y="10.55" width="1.6" height="1.5" fill="#444"/><rect x="9.1" y="10.55" width="1.6" height="1.5" fill="#444"/><rect x="3.2" y="13.45" width="1.6" height="1.5" fill="#444"/><rect x="6.2" y="13.45" width="1.6" height="1.5" fill="#444"/><rect x="3.2" y="16.35" width="1.6" height="1.5" fill="#444"/><rect x="6.2" y="16.35" width="1.6" height="1.5" fill="#444"/><rect x="9.1" y="13.5" width="1.6" height="4.3" fill="#444"/></svg><div class="t" style="left:131.2px;top:455.19px;font-size:17.5px;color:#000;font-weight:normal;">Internet Last Quarter Gross Profit Pr...</div><svg style="position:absolute;left:500px;top:451px;" width="21" height="21" viewBox="0 0 21 21"><rect x="0.75" y="0.75" width="19.5" height="19.5" fill="#fff" stroke="#9a9a9a" stroke-width="1.5"/><path d="M5 12 L8.5 15.2 L15.5 7" fill="none" stroke="#6b6b6b" stroke-width="1.7"/></svg><svg style="position:absolute;left:624px;top:451px;" width="21" height="21" viewBox="0 0 21 21"><rect x="0.75" y="0.75" width="19.5" height="19.5" fill="#fff" stroke="#9a9a9a" stroke-width="1.5"/><path d="M5 12 L8.5 15.2 L15.5 7" fill="none" stroke="#6b6b6b" stroke-width="1.7"/></svg><svg style="position:absolute;left:747px;top:451px;" width="21" height="21" viewBox="0 0 21 21"><rect x="0.75" y="0.75" width="19.5" height="19.5" fill="#fff" stroke="#9a9a9a" stroke-width="1.5"/><path d="M5 12 L8.5 15.2 L15.5 7" fill="none" stroke="#6b6b6b" stroke-width="1.7"/></svg><svg style="position:absolute;left:108px;top:481.8px;" width="14" height="21" viewBox="0 0 14 21"><rect x="0.8" y="0.8" width="11.8" height="19.15" rx="2.2" fill="#fff" stroke="#444" stroke-width="1.6"/><rect x="3.4" y="3.4" width="7.1" height="2.3" fill="#333"/><rect x="3.2" y="7.55" width="1.6" height="1.5" fill="#444"/><rect x="6.2" y="7.55" width="1.6" height="1.5" fill="#444"/><rect x="9.1" y="7.55" width="1.6" height="1.5" fill="#444"/><rect x="3.2" y="10.55" width="1.6" height="1.5" fill="#444"/><rect x="6.2" y="10.55" width="1.6" height="1.5" fill="#444"/><rect x="9.1" y="10.55" width="1.6" height="1.5" fill="#444"/><rect x="3.2" y="13.45" width="1.6" height="1.5" fill="#444"/><rect x="6.2" y="13.45" width="1.6" height="1.5" fill="#444"/><rect x="3.2" y="16.35" width="1.6" height="1.5" fill="#444"/><rect x="6.2" y="16.35" width="1.6" height="1.5" fill="#444"/><rect x="9.1" y="13.5" width="1.6" height="4.3" fill="#444"/></svg><div class="t" style="left:131.2px;top:485.19px;font-size:17.5px;color:#000;font-weight:normal;transform:scaleX(0.9885);">Internet Last Quarter Sales</div><svg style="position:absolute;left:500px;top:481px;" width="21" height="21" viewBox="0 0 21 21"><rect x="0.75" y="0.75" width="19.5" height="19.5" fill="#fff" stroke="#9a9a9a" stroke-width="1.5"/></svg><svg style="position:absolute;left:624px;top:481px;" width="21" height="21" viewBox="0 0 21 21"><rect x="0.75" y="0.75" width="19.5" height="19.5" fill="#fff" stroke="#9a9a9a" stroke-width="1.5"/></svg><svg style="position:absolute;left:747px;top:481px;" width="21" height="21" viewBox="0 0 21 21"><rect x="0.75" y="0.75" width="19.5" height="19.5" fill="#fff" stroke="#9a9a9a" stroke-width="1.5"/></svg><svg style="position:absolute;left:108px;top:511.8px;" width="14" height="21" viewBox="0 0 14 21"><rect x="0.8" y="0.8" width="11.8" height="19.15" rx="2.2" fill="#fff" stroke="#444" stroke-width="1.6"/><rect x="3.4" y="3.4" width="7.1" height="2.3" fill="#333"/><rect x="3.2" y="7.55" width="1.6" height="1.5" fill="#444"/><rect x="6.2" y="7.55" width="1.6" height="1.5" fill="#444"/><rect x="9.1" y="7.55" width="1.6" height="1.5" fill="#444"/><rect x="3.2" y="10.55" width="1.6" height="1.5" fill="#444"/><rect x="6.2" y="10.55" width="1.6" height="1.5" fill="#444"/><rect x="9.1" y="10.55" width="1.6" height="1.5" fill="#444"/><rect x="3.2" y="13.45" width="1.6" height="1.5" fill="#444"/><rect x="6.2" y="13.45" width="1.6" height="1.5" fill="#444"/><rect x="3.2" y="16.35" width="1.6" height="1.5" fill="#444"/><rect x="6.2" y="16.35" width="1.6" height="1.5" fill="#444"/><rect x="9.1" y="13.5" width="1.6" height="4.3" fill="#444"/></svg><div class="t" style="left:131.2px;top:515.19px;font-size:17.5px;color:#000;font-weight:normal;transform:scaleX(1.0042);">Internet Last Quarter Sales Proporti...</div><svg style="position:absolute;left:500px;top:511px;" width="21" height="21" viewBox="0 0 21 21"><rect x="0.75" y="0.75" width="19.5" height="19.5" fill="#fff" stroke="#9a9a9a" stroke-width="1.5"/></svg><svg style="position:absolute;left:624px;top:511px;" width="21" height="21" viewBox="0 0 21 21"><rect x="0.75" y="0.75" width="19.5" height="19.5" fill="#fff" stroke="#9a9a9a" stroke-width="1.5"/></svg><svg style="position:absolute;left:747px;top:511px;" width="21" height="21" viewBox="0 0 21 21"><rect x="0.75" y="0.75" width="19.5" height="19.5" fill="#fff" stroke="#9a9a9a" stroke-width="1.5"/></svg><svg style="position:absolute;left:59.2px;top:541.3px;" width="12" height="20.5" viewBox="0 0 12 20.5"><rect x="0.65" y="0.65" width="10.7" height="19.7" fill="#fff" stroke="#333" stroke-width="1.3"/><rect x="0" y="0" width="12" height="2.2" fill="#333"/><path d="M0 7.7 H12 M0 13.8 H12" stroke="#333" stroke-width="1.3"/><rect x="2.8" y="4.3" width="6" height="1.9" fill="#e8e8ec"/><rect x="2.8" y="10.2" width="6" height="1.9" fill="#e8e8ec"/><rect x="2.8" y="16.2" width="6" height="1.9" fill="#e8e8ec"/></svg><div class="t" style="left:82.2px;top:545.19px;font-size:17.5px;color:#000;font-weight:normal;transform:scaleX(1.0013);">Carrier Tracking Number</div><svg style="position:absolute;left:500px;top:541px;" width="21" height="21" viewBox="0 0 21 21"><rect x="0.75" y="0.75" width="19.5" height="19.5" fill="#fff" stroke="#9a9a9a" stroke-width="1.5"/><path d="M5 12 L8.5 15.2 L15.5 7" fill="none" stroke="#6b6b6b" stroke-width="1.7"/></svg><svg style="position:absolute;left:624px;top:541px;" width="21" height="21" viewBox="0 0 21 21"><rect x="0.75" y="0.75" width="19.5" height="19.5" fill="#fff" stroke="#9a9a9a" stroke-width="1.5"/></svg><svg style="position:absolute;left:747px;top:541px;" width="21" height="21" viewBox="0 0 21 21"><rect x="0.75" y="0.75" width="19.5" height="19.5" fill="#fff" stroke="#9a9a9a" stroke-width="1.5"/></svg><svg style="position:absolute;left:59.2px;top:571.3px;" width="12" height="20.5" viewBox="0 0 12 20.5"><rect x="0.65" y="0.65" width="10.7" height="19.7" fill="#fff" stroke="#333" stroke-width="1.3"/><rect x="0" y="0" width="12" height="2.2" fill="#333"/><path d="M0 7.7 H12 M0 13.8 H12" stroke="#333" stroke-width="1.3"/><rect x="2.8" y="4.3" width="6" height="1.9" fill="#e8e8ec"/><rect x="2.8" y="10.2" width="6" height="1.9" fill="#e8e8ec"/><rect x="2.8" y="16.2" width="6" height="1.9" fill="#e8e8ec"/></svg><div class="t" style="left:82.2px;top:575.19px;font-size:17.5px;color:#a3a3a3;font-weight:normal;transform:scaleX(0.9530);">CurrencyKey</div><svg style="position:absolute;left:500px;top:571px;" width="21" height="21" viewBox="0 0 21 21"><rect x="0.75" y="0.75" width="19.5" height="19.5" fill="#fff" stroke="#9a9a9a" stroke-width="1.5"/><path d="M5 12 L8.5 15.2 L15.5 7" fill="none" stroke="#6b6b6b" stroke-width="1.7"/></svg><svg style="position:absolute;left:624px;top:571px;" width="21" height="21" viewBox="0 0 21 21"><rect x="0.75" y="0.75" width="19.5" height="19.5" fill="#fff" stroke="#9a9a9a" stroke-width="1.5"/></svg><svg style="position:absolute;left:747px;top:571px;" width="21" height="21" viewBox="0 0 21 21"><rect x="0.75" y="0.75" width="19.5" height="19.5" fill="#fff" stroke="#9a9a9a" stroke-width="1.5"/></svg><svg style="position:absolute;left:59.2px;top:601.3px;" width="12" height="20.5" viewBox="0 0 12 20.5"><rect x="0.65" y="0.65" width="10.7" height="19.7" fill="#fff" stroke="#333" stroke-width="1.3"/><rect x="0" y="0" width="12" height="2.2" fill="#333"/><path d="M0 7.7 H12 M0 13.8 H12" stroke="#333" stroke-width="1.3"/><rect x="2.8" y="4.3" width="6" height="1.9" fill="#e8e8ec"/><rect x="2.8" y="10.2" width="6" height="1.9" fill="#e8e8ec"/><rect x="2.8" y="16.2" width="6" height="1.9" fill="#e8e8ec"/></svg><div class="t" style="left:82.2px;top:605.19px;font-size:17.5px;color:#000;font-weight:normal;transform:scaleX(1.0116);">Customer PO Number</div><svg style="position:absolute;left:500px;top:601px;" width="21" height="21" viewBox="0 0 21 21"><rect x="0.75" y="0.75" width="19.5" height="19.5" fill="#fff" stroke="#9a9a9a" stroke-width="1.5"/><path d="M5 12 L8.5 15.2 L15.5 7" fill="none" stroke="#6b6b6b" stroke-width="1.7"/></svg><svg style="position:absolute;left:624px;top:601px;" width="21" height="21" viewBox="0 0 21 21"><rect x="0.75" y="0.75" width="19.5" height="19.5" fill="#fff" stroke="#9a9a9a" stroke-width="1.5"/></svg><svg style="position:absolute;left:747px;top:601px;" width="21" height="21" viewBox="0 0 21 21"><rect x="0.75" y="0.75" width="19.5" height="19.5" fill="#fff" stroke="#9a9a9a" stroke-width="1.5"/></svg><svg style="position:absolute;left:59.2px;top:631.3px;" width="12" height="20.5" viewBox="0 0 12 20.5"><rect x="0.65" y="0.65" width="10.7" height="19.7" fill="#fff" stroke="#333" stroke-width="1.3"/><rect x="0" y="0" width="12" height="2.2" fill="#333"/><path d="M0 7.7 H12 M0 13.8 H12" stroke="#333" stroke-width="1.3"/><rect x="2.8" y="4.3" width="6" height="1.9" fill="#e8e8ec"/><rect x="2.8" y="10.2" width="6" height="1.9" fill="#e8e8ec"/><rect x="2.8" y="16.2" width="6" height="1.9" fill="#e8e8ec"/></svg><div class="t" style="left:82.2px;top:635.19px;font-size:17.5px;color:#a3a3a3;font-weight:normal;transform:scaleX(0.9858);">CustomerKey</div><svg style="position:absolute;left:500px;top:631px;" width="21" height="21" viewBox="0 0 21 21"><rect x="0.75" y="0.75" width="19.5" height="19.5" fill="#fff" stroke="#9a9a9a" stroke-width="1.5"/><path d="M5 12 L8.5 15.2 L15.5 7" fill="none" stroke="#6b6b6b" stroke-width="1.7"/></svg><svg style="position:absolute;left:624px;top:631px;" width="21" height="21" viewBox="0 0 21 21"><rect x="0.75" y="0.75" width="19.5" height="19.5" fill="#fff" stroke="#9a9a9a" stroke-width="1.5"/></svg><svg style="position:absolute;left:747px;top:631px;" width="21" height="21" viewBox="0 0 21 21"><rect x="0.75" y="0.75" width="19.5" height="19.5" fill="#fff" stroke="#9a9a9a" stroke-width="1.5"/></svg><svg style="position:absolute;left:59.2px;top:661.3px;" width="12" height="20.5" viewBox="0 0 12 20.5"><rect x="0.65" y="0.65" width="10.7" height="19.7" fill="#fff" stroke="#333" stroke-width="1.3"/><rect x="0" y="0" width="12" height="2.2" fill="#333"/><path d="M0 7.7 H12 M0 13.8 H12" stroke="#333" stroke-width="1.3"/><rect x="2.8" y="4.3" width="6" height="1.9" fill="#e8e8ec"/><rect x="2.8" y="10.2" width="6" height="1.9" fill="#e8e8ec"/><rect x="2.8" y="16.2" width="6" height="1.9" fill="#e8e8ec"/></svg><div class="t" style="left:81.2px;top:665.19px;font-size:17.5px;color:#000;font-weight:normal;transform:scaleX(1.0649);">Discount Amount</div><svg style="position:absolute;left:500px;top:661px;" width="21" height="21" viewBox="0 0 21 21"><rect x="0.75" y="0.75" width="19.5" height="19.5" fill="#fff" stroke="#9a9a9a" stroke-width="1.5"/><path d="M5 12 L8.5 15.2 L15.5 7" fill="none" stroke="#6b6b6b" stroke-width="1.7"/></svg><svg style="position:absolute;left:624px;top:661px;" width="21" height="21" viewBox="0 0 21 21"><rect x="0.75" y="0.75" width="19.5" height="19.5" fill="#fff" stroke="#9a9a9a" stroke-width="1.5"/></svg><svg style="position:absolute;left:747px;top:661px;" width="21" height="21" viewBox="0 0 21 21"><rect x="0.75" y="0.75" width="19.5" height="19.5" fill="#fff" stroke="#9a9a9a" stroke-width="1.5"/></svg><svg style="position:absolute;left:59.2px;top:691.3px;" width="12" height="20.5" viewBox="0 0 12 20.5"><rect x="0.65" y="0.65" width="10.7" height="19.7" fill="#fff" stroke="#333" stroke-width="1.3"/><rect x="0" y="0" width="12" height="2.2" fill="#333"/><path d="M0 7.7 H12 M0 13.8 H12" stroke="#333" stroke-width="1.3"/><rect x="2.8" y="4.3" width="6" height="1.9" fill="#e8e8ec"/><rect x="2.8" y="10.2" width="6" height="1.9" fill="#e8e8ec"/><rect x="2.8" y="16.2" width="6" height="1.9" fill="#e8e8ec"/></svg><div class="t" style="left:81.2px;top:695.19px;font-size:17.5px;color:#a3a3a3;font-weight:normal;transform:scaleX(0.9821);">DueDateKey</div><svg style="position:absolute;left:500px;top:691px;" width="21" height="21" viewBox="0 0 21 21"><rect x="0.75" y="0.75" width="19.5" height="19.5" fill="#fff" stroke="#9a9a9a" stroke-width="1.5"/><path d="M5 12 L8.5 15.2 L15.5 7" fill="none" stroke="#6b6b6b" stroke-width="1.7"/></svg><svg style="position:absolute;left:624px;top:691px;" width="21" height="21" viewBox="0 0 21 21"><rect x="0.75" y="0.75" width="19.5" height="19.5" fill="#fff" stroke="#9a9a9a" stroke-width="1.5"/></svg><svg style="position:absolute;left:747px;top:691px;" width="21" height="21" viewBox="0 0 21 21"><rect x="0.75" y="0.75" width="19.5" height="19.5" fill="#fff" stroke="#9a9a9a" stroke-width="1.5"/></svg><svg style="position:absolute;left:59.2px;top:721.3px;" width="12" height="20.5" viewBox="0 0 12 20.5"><rect x="0.65" y="0.65" width="10.7" height="19.7" fill="#fff" stroke="#333" stroke-width="1.3"/><rect x="0" y="0" width="12" height="2.2" fill="#333"/><path d="M0 7.7 H12 M0 13.8 H12" stroke="#333" stroke-width="1.3"/><rect x="2.8" y="4.3" width="6" height="1.9" fill="#e8e8ec"/><rect x="2.8" y="10.2" width="6" height="1.9" fill="#e8e8ec"/><rect x="2.8" y="16.2" width="6" height="1.9" fill="#e8e8ec"/></svg><div class="t" style="left:81.2px;top:725.19px;font-size:17.5px;color:#000;font-weight:normal;transform:scaleX(1.0401);">Extended Amount</div><svg style="position:absolute;left:500px;top:721px;" width="21" height="21" viewBox="0 0 21 21"><rect x="0.75" y="0.75" width="19.5" height="19.5" fill="#fff" stroke="#9a9a9a" stroke-width="1.5"/><path d="M5 12 L8.5 15.2 L15.5 7" fill="none" stroke="#6b6b6b" stroke-width="1.7"/></svg><svg style="position:absolute;left:624px;top:721px;" width="21" height="21" viewBox="0 0 21 21"><rect x="0.75" y="0.75" width="19.5" height="19.5" fill="#fff" stroke="#9a9a9a" stroke-width="1.5"/></svg><svg style="position:absolute;left:747px;top:721px;" width="21" height="21" viewBox="0 0 21 21"><rect x="0.75" y="0.75" width="19.5" height="19.5" fill="#fff" stroke="#9a9a9a" stroke-width="1.5"/></svg><svg style="position:absolute;left:59.2px;top:751.3px;" width="12" height="20.5" viewBox="0 0 12 20.5"><rect x="0.65" y="0.65" width="10.7" height="19.7" fill="#fff" stroke="#333" stroke-width="1.3"/><rect x="0" y="0" width="12" height="2.2" fill="#333"/><path d="M0 7.7 H12 M0 13.8 H12" stroke="#333" stroke-width="1.3"/><rect x="2.8" y="4.3" width="6" height="1.9" fill="#e8e8ec"/><rect x="2.8" y="10.2" width="6" height="1.9" fill="#e8e8ec"/><rect x="2.8" y="16.2" width="6" height="1.9" fill="#e8e8ec"/></svg><div class="t" style="left:81.2px;top:755.19px;font-size:17.5px;color:#000;font-weight:normal;transform:scaleX(1.0236);">Freight</div><svg style="position:absolute;left:500px;top:751px;" width="21" height="21" viewBox="0 0 21 21"><rect x="0.75" y="0.75" width="19.5" height="19.5" fill="#fff" stroke="#9a9a9a" stroke-width="1.5"/><path d="M5 12 L8.5 15.2 L15.5 7" fill="none" stroke="#6b6b6b" stroke-width="1.7"/></svg><svg style="position:absolute;left:624px;top:751px;" width="21" height="21" viewBox="0 0 21 21"><rect x="0.75" y="0.75" width="19.5" height="19.5" fill="#fff" stroke="#9a9a9a" stroke-width="1.5"/></svg><svg style="position:absolute;left:747px;top:751px;" width="21" height="21" viewBox="0 0 21 21"><rect x="0.75" y="0.75" width="19.5" height="19.5" fill="#fff" stroke="#9a9a9a" stroke-width="1.5"/></svg><svg style="position:absolute;left:59.2px;top:781.3px;" width="12" height="20.5" viewBox="0 0 12 20.5"><rect x="0.65" y="0.65" width="10.7" height="19.7" fill="#fff" stroke="#333" stroke-width="1.3"/><rect x="0" y="0" width="12" height="2.2" fill="#333"/><path d="M0 7.7 H12 M0 13.8 H12" stroke="#333" stroke-width="1.3"/><rect x="2.8" y="4.3" width="6" height="1.9" fill="#e8e8ec"/><rect x="2.8" y="10.2" width="6" height="1.9" fill="#e8e8ec"/><rect x="2.8" y="16.2" width="6" height="1.9" fill="#e8e8ec"/></svg><svg style="position:absolute;left:50px;top:777px;" width="30" height="30" viewBox="0 0 30 30"><path d="M10.2 24 C11 25.5 12.5 25 13.2 23 L16.5 14.5 C17.2 12.8 18.5 12.2 19.8 13 M13.8 16.8 H18.5 M17 16 C18 15.5 19 16 19.8 18 L21.2 21 C22 22.5 23 22.5 24.2 21.5 M25.8 15.8 C25 15.5 24 16 23 17.5 L19.5 21 C18.5 22.2 17.5 22.2 16.8 21.6" fill="none" stroke="#fff" stroke-width="3.2" stroke-linecap="round"/><path d="M10.2 24 C11 25.5 12.5 25 13.2 23 L16.5 14.5 C17.2 12.8 18.5 12.2 19.8 13 M13.8 16.8 H18.5 M17 16 C18 15.5 19 16 19.8 18 L21.2 21 C22 22.5 23 22.5 24.2 21.5 M25.8 15.8 C25 15.5 24 16 23 17.5 L19.5 21 C18.5 22.2 17.5 22.2 16.8 21.6" fill="none" stroke="#333" stroke-width="1.4" stroke-linecap="round"/></svg><div class="t" style="left:82.2px;top:785.19px;font-size:17.5px;color:#000;font-weight:normal;">Gross Profit</div><svg style="position:absolute;left:500px;top:781px;" width="21" height="21" viewBox="0 0 21 21"><rect x="0.75" y="0.75" width="19.5" height="19.5" fill="#fff" stroke="#9a9a9a" stroke-width="1.5"/><path d="M5 12 L8.5 15.2 L15.5 7" fill="none" stroke="#6b6b6b" stroke-width="1.7"/></svg><svg style="position:absolute;left:624px;top:781px;" width="21" height="21" viewBox="0 0 21 21"><rect x="0.75" y="0.75" width="19.5" height="19.5" fill="#fff" stroke="#9a9a9a" stroke-width="1.5"/></svg><svg style="position:absolute;left:747px;top:781px;" width="21" height="21" viewBox="0 0 21 21"><rect x="0.75" y="0.75" width="19.5" height="19.5" fill="#fff" stroke="#9a9a9a" stroke-width="1.5"/></svg><svg style="position:absolute;left:59.2px;top:811.3px;" width="12" height="20.5" viewBox="0 0 12 20.5"><rect x="0.65" y="0.65" width="10.7" height="19.7" fill="#fff" stroke="#333" stroke-width="1.3"/><rect x="0" y="0" width="12" height="2.2" fill="#333"/><path d="M0 7.7 H12 M0 13.8 H12" stroke="#333" stroke-width="1.3"/><rect x="2.8" y="4.3" width="6" height="1.9" fill="#e8e8ec"/><rect x="2.8" y="10.2" width="6" height="1.9" fill="#e8e8ec"/><rect x="2.8" y="16.2" width="6" height="1.9" fill="#e8e8ec"/></svg><div class="t" style="left:82.2px;top:815.19px;font-size:17.5px;color:#000;font-weight:normal;transform:scaleX(1.0174);">Order Date</div><svg style="position:absolute;left:500px;top:811px;" width="21" height="21" viewBox="0 0 21 21"><rect x="0.75" y="0.75" width="19.5" height="19.5" fill="#fff" stroke="#9a9a9a" stroke-width="1.5"/><path d="M5 12 L8.5 15.2 L15.5 7" fill="none" stroke="#6b6b6b" stroke-width="1.7"/></svg><svg style="position:absolute;left:624px;top:811px;" width="21" height="21" viewBox="0 0 21 21"><rect x="0.75" y="0.75" width="19.5" height="19.5" fill="#fff" stroke="#9a9a9a" stroke-width="1.5"/></svg><svg style="position:absolute;left:747px;top:811px;" width="21" height="21" viewBox="0 0 21 21"><rect x="0.75" y="0.75" width="19.5" height="19.5" fill="#fff" stroke="#9a9a9a" stroke-width="1.5"/></svg><svg style="position:absolute;left:59.2px;top:841.3px;" width="12" height="20.5" viewBox="0 0 12 20.5"><rect x="0.65" y="0.65" width="10.7" height="19.7" fill="#fff" stroke="#333" stroke-width="1.3"/><rect x="0" y="0" width="12" height="2.2" fill="#333"/><path d="M0 7.7 H12 M0 13.8 H12" stroke="#333" stroke-width="1.3"/><rect x="2.8" y="4.3" width="6" height="1.9" fill="#e8e8ec"/><rect x="2.8" y="10.2" width="6" height="1.9" fill="#e8e8ec"/><rect x="2.8" y="16.2" width="6" height="1.9" fill="#e8e8ec"/></svg><div class="t" style="left:81.7px;top:845.19px;font-size:17.5px;color:#000;font-weight:normal;">Order Quantity</div><svg style="position:absolute;left:500px;top:841px;" width="21" height="21" viewBox="0 0 21 21"><rect x="0.75" y="0.75" width="19.5" height="19.5" fill="#fff" stroke="#9a9a9a" stroke-width="1.5"/><path d="M5 12 L8.5 15.2 L15.5 7" fill="none" stroke="#6b6b6b" stroke-width="1.7"/></svg><svg style="position:absolute;left:624px;top:841px;" width="21" height="21" viewBox="0 0 21 21"><rect x="0.75" y="0.75" width="19.5" height="19.5" fill="#fff" stroke="#9a9a9a" stroke-width="1.5"/></svg><svg style="position:absolute;left:747px;top:841px;" width="21" height="21" viewBox="0 0 21 21"><rect x="0.75" y="0.75" width="19.5" height="19.5" fill="#fff" stroke="#9a9a9a" stroke-width="1.5"/></svg></div><svg style="position:absolute;left:0px;top:0px;pointer-events:none" width="961" height="854" viewBox="0 0 961 854"><rect x="2.2" y="107.15" width="953.6" height="743.35" fill="none" stroke="#9e9e9e" stroke-width="1.6"/></svg><div style="position:absolute;left:929px;top:147.5px;width:26px;height:702px;background:#f0f0f0"></div><div style="position:absolute;left:930px;top:148px;width:24px;height:25px;background:#fff;border:1.5px solid #9a9a9a;box-sizing:border-box"></div><svg style="position:absolute;left:935px;top:154px;" width="14" height="10" viewBox="0 0 14 10"><path d="M1.5 8 H11.5 L6.5 2 Z" fill="#6b6b6b"/></svg><div style="position:absolute;left:930px;top:172px;width:24px;height:238px;background:#fff;border:1.5px solid #9a9a9a;box-sizing:border-box"></div><div style="position:absolute;left:930px;top:824px;width:24px;height:25px;background:#fff;border:1.5px solid #9a9a9a;box-sizing:border-box"></div><svg style="position:absolute;left:935px;top:833px;" width="14" height="10" viewBox="0 0 14 10"><path d="M1.5 1.5 H11.5 L6.5 7.5 Z" fill="#6b6b6b"/></svg>
</body></html>
